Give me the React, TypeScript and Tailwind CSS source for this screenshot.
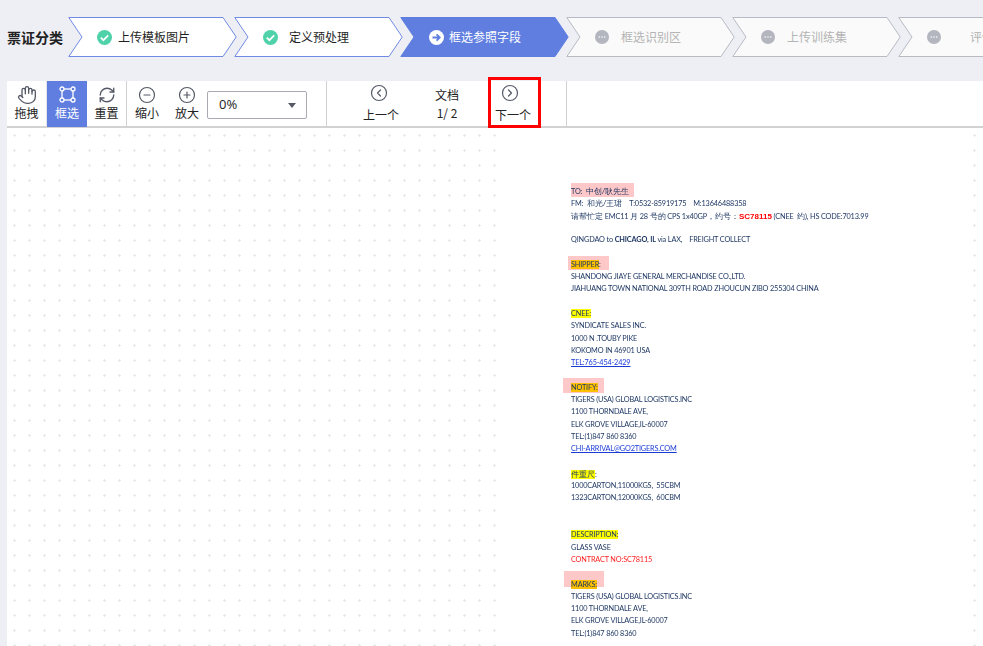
import React from 'react';
import { Hand, RefreshCw, CircleMinus, CirclePlus, CircleChevronLeft, CircleChevronRight } from 'lucide-react';

type StepState = 'done' | 'active' | 'todo';

const steps: { label: string; state: StepState; textClass: string }[] = [
  { label: '上传模板图片', state: 'done', textClass: 'ml-[6px]' },
  { label: '定义预处理', state: 'done', textClass: 'ml-[11px]' },
  { label: '框选参照字段', state: 'active', textClass: 'ml-[5px]' },
  { label: '框选识别区', state: 'todo', textClass: 'ml-[12px]' },
  { label: '上传训练集', state: 'todo', textClass: 'ml-[12px]' },
  { label: '评估结果', state: 'todo', textClass: 'ml-[29px]' },
];

const StepIcon: React.FC<{ state: StepState }> = ({ state }) => {
  if (state === 'done') {
    return (
      <svg width="15" height="15" viewBox="0 0 15 15" className="shrink-0">
        <circle cx="7.5" cy="7.5" r="7.5" fill="#4fd2a9" />
        <path d="M3.8 7.6l2.6 2.6 4.8-4.9" fill="none" stroke="#fff" strokeWidth="1.7" />
      </svg>
    );
  }
  if (state === 'active') {
    return (
      <svg width="15" height="15" viewBox="0 0 15 15" className="shrink-0">
        <circle cx="7.5" cy="7.5" r="7.5" fill="#fff" />
        <path d="M3.5 7.5h7M7.6 4.4l3.1 3.1-3.1 3.1" fill="none" stroke="#5f7ee0" strokeWidth="1.8" />
      </svg>
    );
  }
  return (
    <svg width="14" height="14" viewBox="0 0 14 14" className="shrink-0">
      <circle cx="7" cy="7" r="7" fill="#b3b5bf" />
      <circle cx="4.2" cy="7" r="0.8" fill="#fff" />
      <circle cx="7" cy="7" r="0.8" fill="#fff" />
      <circle cx="9.8" cy="7" r="0.8" fill="#fff" />
    </svg>
  );
};

const Step: React.FC<{ label: string; state: StepState; textClass: string }> = ({ label, state, textClass }) => {
  const fill = state === 'active' ? '#5f7ee0' : state === 'done' ? '#ffffff' : '#fafafa';
  const stroke = state === 'active' ? '#5f7ee0' : state === 'done' ? '#6f8ae3' : '#b8bac4';
  const text = state === 'active' ? 'text-white' : state === 'done' ? 'text-[#1f1f1f]' : 'text-[#b4b4b4]';
  return (
    <div className="relative w-[169px] h-[40px] -mr-[3px] shrink-0 flex items-center pl-[29px]">
      <svg width="169" height="40" viewBox="0 0 169 40" className="absolute left-0 top-0">
        <path
          d="M0.8 0.5H155L168.2 20 155 39.5H0.8L14 20Z"
          fill={fill}
          stroke={stroke}
          strokeWidth="1"
          strokeLinejoin="round"
        />
      </svg>
      <div className="relative flex items-center">
        <StepIcon state={state} />
        <span className={`text-xs whitespace-nowrap ${text} ${textClass}`}>{label}</span>
      </div>
    </div>
  );
};

const SelectIcon = () => (
  <svg width="17" height="17" viewBox="0 0 17 17" fill="none" stroke="#fff" strokeWidth="1.3">
    <rect x="3" y="3" width="11" height="11" />
    <circle cx="3" cy="3" r="2" fill="#5f7ee0" />
    <circle cx="14" cy="3" r="2" fill="#5f7ee0" />
    <circle cx="3" cy="14" r="2" fill="#5f7ee0" />
    <circle cx="14" cy="14" r="2" fill="#5f7ee0" />
  </svg>
);

const ToolButton: React.FC<{ label: string; className?: string; labelClass?: string; children: React.ReactNode }> = ({
  label,
  className,
  labelClass = 'mt-[1px]',
  children,
}) => (
  <div className={`flex flex-col items-center shrink-0 h-[46px] pt-[5px] text-xs text-[#222] ${className}`}>
    <div className="h-[17px] flex items-center justify-center">{children}</div>
    <span className={`leading-[18px] ${labelClass}`}>{label}</span>
  </div>
);

type Line = { text?: React.ReactNode; className?: string };

const yellow = 'bg-[#ffff00]';
const orange = 'bg-[#ffc000]';
const Cjk: React.FC<{ children: React.ReactNode }> = ({ children }) => <span className="text-[8.3px] tracking-normal">{children}</span>;

const docLines: Line[] = [
  { text: <>TO:  <Cjk>中创/耿先生</Cjk></> },
  { text: <>FM:  <Cjk>和光/王珺</Cjk>    T:0532-85919175    M:13646488358</> },
  {
    text: (
      <>
        <Cjk>请帮忙定</Cjk> EMC11 <Cjk>月</Cjk> 28 <Cjk>号的</Cjk> CPS 1x40GP<Cjk>，约号：</Cjk>
        <b className="text-[#ff0000] text-[8px] tracking-normal font-['Liberation_Sans',sans-serif]">SC78115</b> (CNEE  <Cjk>约</Cjk>), HS CODE:7013.99
      </>
    ),
  },
  {},
  {
    text: (
      <>
        QINGDAO to <b>CHICAGO, IL</b> via LAX,    FREIGHT COLLECT
      </>
    ),
  },
  {},
  { text: <><span className={orange}>SHIPPER</span>:</> },
  { text: 'SHANDONG JIAYE GENERAL MERCHANDISE CO.,LTD.' },
  { text: 'JIAHUANG TOWN NATIONAL 309TH ROAD ZHOUCUN ZIBO 255304 CHINA' },
  {},
  { text: <span className={yellow}>CNEE:</span> },
  { text: 'SYNDICATE SALES INC.' },
  { text: '1000 N .TOUBY PIKE' },
  { text: 'KOKOMO IN 46901 USA' },
  { text: 'TEL:765-454-2429', className: 'text-[#1a3bd6] underline' },
  {},
  { text: <span className={orange}>NOTIFY:</span> },
  { text: 'TIGERS (USA) GLOBAL LOGISTICS.INC' },
  { text: '1100 THORNDALE AVE,' },
  { text: 'ELK GROVE VILLAGE,IL-60007' },
  { text: 'TEL:(1)847 860 8360' },
  { text: 'CHI-ARRIVAL@GO2TIGERS.COM', className: 'text-[#1a3bd6] underline' },
  {},
  { text: <><span className={yellow}><Cjk>件重尺</Cjk></span>:</> },
  { text: '1000CARTON,11000KGS,  55CBM' },
  { text: '1323CARTON,12000KGS,  60CBM' },
  {},
  {},
  { text: <span className={yellow}>DESCRIPTION:</span> },
  { text: 'GLASS VASE' },
  { text: 'CONTRACT NO:SC78115', className: 'text-[#ff2020]' },
  {},
  { text: <span className={orange}>MARKS:</span> },
  { text: 'TIGERS (USA) GLOBAL LOGISTICS.INC' },
  { text: '1100 THORNDALE AVE,' },
  { text: 'ELK GROVE VILLAGE,IL-60007' },
  { text: 'TEL:(1)847 860 8360' },
];

export default function App() {
  return (
    <div className="w-[983px] h-[646px] overflow-hidden bg-[#eeeff5] font-['Noto_Sans_CJK_SC',sans-serif] flex flex-col">
      <div className="h-[81px] shrink-0 pt-[17px] pl-[7px] flex items-start overflow-hidden">
        <div className="w-[61px] h-[40px] shrink-0 flex items-center text-sm font-bold text-[#222] whitespace-nowrap">票证分类</div>
        {steps.map((s) => (
          <Step key={s.label} {...s} />
        ))}
      </div>

      <div className="ml-[7px] flex-1 flex flex-col bg-white min-h-0">
        <div className="h-[47px] shrink-0 flex border-b-2 border-[#d2d2d2]">
          <ToolButton label="拖拽" className="w-[40px] border-r border-[#e4e4e4]">
            <Hand size={20} strokeWidth={1.6} color="#555a66" />
          </ToolButton>
          <ToolButton label="框选" className="w-[40px] bg-[#5f7ee0] !text-white">
            <SelectIcon />
          </ToolButton>
          <ToolButton label="重置" className="w-[40px] border-r border-[#d0d0d0]">
            <RefreshCw size={18} strokeWidth={1.8} color="#555a66" />
          </ToolButton>
          <ToolButton label="缩小" className="w-[40px]">
            <CircleMinus size={18} strokeWidth={1.6} color="#555a66" />
          </ToolButton>
          <ToolButton label="放大" className="w-[40px]">
            <CirclePlus size={18} strokeWidth={1.6} color="#555a66" />
          </ToolButton>
          <div className="mt-[10px] w-[100px] h-[28px] shrink-0 border border-[#a9abb3] rounded-[2px] flex items-center justify-between pl-[11px] pr-[10px] text-[13px] text-[#222]">
            <span className="font-['Open_Sans',sans-serif]">0%</span>
            <span className="w-0 h-0 border-x-[4px] border-x-transparent border-t-[5px] border-t-[#555a66]" />
          </div>
          <div className="w-[20px] border-r border-[#d0d0d0] shrink-0" />
          <ToolButton label="上一个" labelClass="mt-[5px]" className="w-[108px] !pt-[3px]">
            <CircleChevronLeft size={18} strokeWidth={1.6} color="#555a66" className="mr-[4px]" />
          </ToolButton>
          <div className="w-[24px] shrink-0 flex flex-col items-center text-xs text-[#222] pt-[5px] leading-[18px]">
            <span className="whitespace-nowrap">文档</span>
            <span className="whitespace-nowrap">1/ 2</span>
          </div>
          <div className="relative ml-[29px] w-[53px] shrink-0">
            <ToolButton label="下一个" labelClass="mt-[5px]" className="w-[50px] !pt-[3px]">
              <CircleChevronRight size={18} strokeWidth={1.6} color="#555a66" className="mr-[6px]" />
            </ToolButton>
            <div className="absolute left-0 -top-[4px] w-[53px] h-[51px] border-[3px] border-[#ff0000]" />
          </div>
          <div className="w-[26px] border-r border-[#d0d0d0] shrink-0" />
        </div>

        <div className="flex-1 min-h-0 overflow-hidden pl-[493px] pr-[13px] bg-[radial-gradient(circle,#e8e8e8_1px,transparent_1.3px)] bg-[size:15px_15px]">
          <div className="relative h-full bg-white">
            <div className="absolute left-[71px] top-[55px] w-[63px] h-[14px] bg-[#ffc8c8]" />
            <div className="absolute left-[68px] top-[128px] w-[41px] h-[14px] bg-[#ffc8c8]" />
            <div className="absolute left-[63px] top-[250px] w-[41px] h-[15px] bg-[#ffc8c8]" />
            <div className="absolute left-[64px] top-[443px] w-[40px] h-[16px] bg-[#ffc8c8]" />
            <div className="relative pl-[71px] pt-[57px] text-[7.3px] tracking-[-0.15px] leading-[12.3px] text-[#1f3864] font-['Lato',sans-serif] whitespace-pre blur-[0.25px]">
              {docLines.map((l, i) => (
                <div key={i} className={`h-[12.3px] ${l.className ?? ''}`}>
                  {l.text}
                </div>
              ))}
            </div>
          </div>
        </div>
      </div>
    </div>
  );
}
